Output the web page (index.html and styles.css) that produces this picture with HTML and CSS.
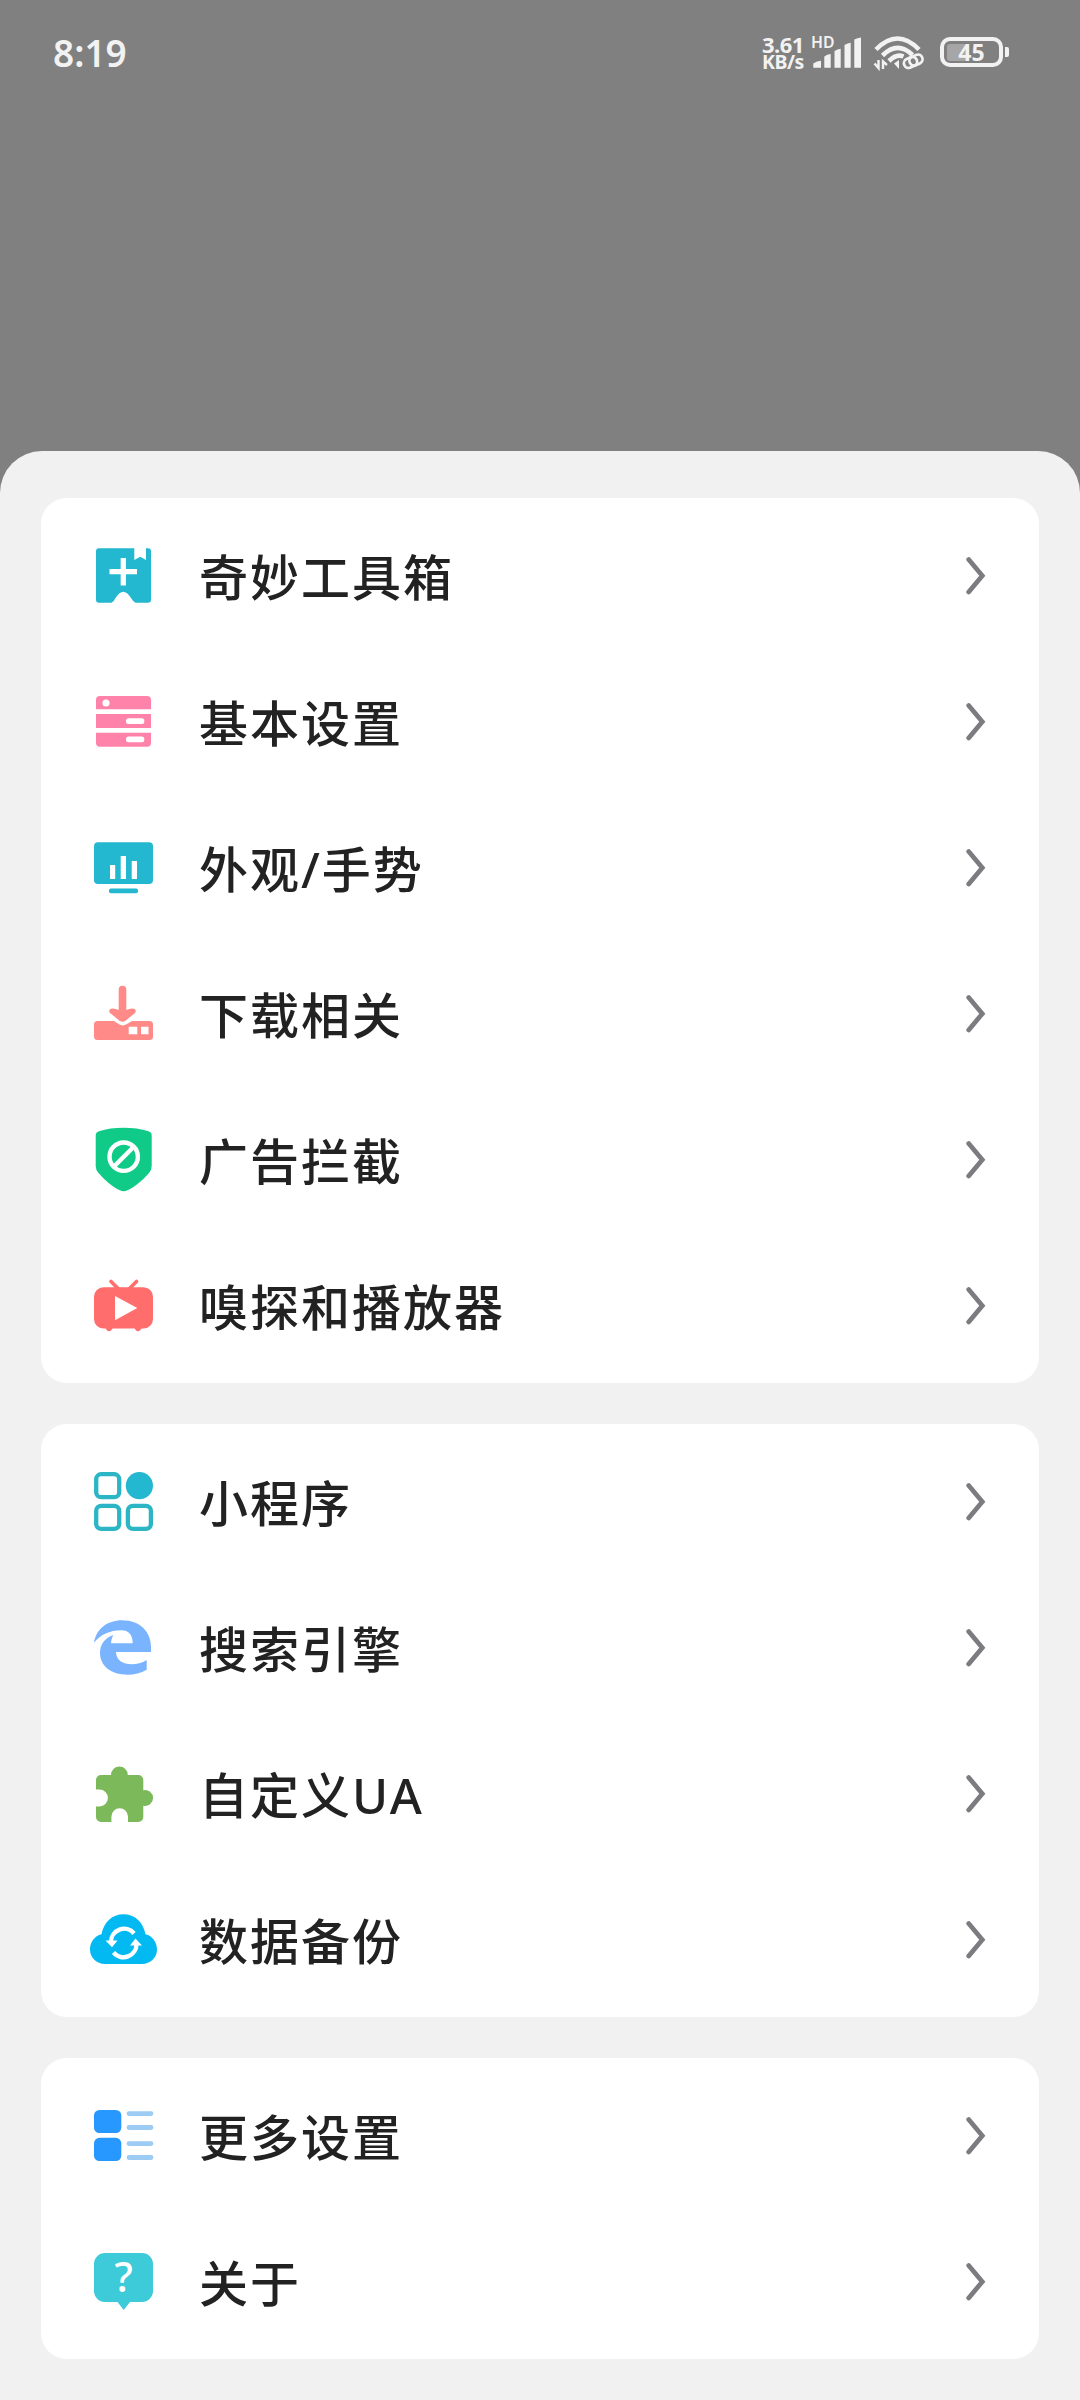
FILE: index.html
```html
<!DOCTYPE html>
<html lang="zh-CN">
<head>
<meta charset="utf-8">
<title>设置</title>
<link rel="stylesheet" href="styles.css">
</head>
<body>
<svg class="defs" width="0" height="0">
  <symbol id="chevron" viewBox="0 0 24 42"><path d="M2.700 4.500 16.300 20.700 2.700 37" fill="none" stroke="#7b7b80" stroke-width="4.700" stroke-linecap="round" stroke-linejoin="miter"/></symbol>
</svg>
<div class="screen">
  <header class="status">
    <div class="time">8:19</div>
    <div class="indicators">
      <div class="speed"><span class="rate">3.61</span><span class="unit">KB/s</span></div>
      <svg class="signal" width="52" height="38" viewBox="0 0 52 38" fill="#f2f2f2">
        <text x="1" y="14" font-size="16" font-weight="600" textLength="23.500" lengthAdjust="spacingAndGlyphs">HD</text>
        <path d="M3.300 33.700V29.500Q7 27 11 26.700V33.700Z"/>
        <path d="M14.300 33.700V22.500Q17 20.300 20.700 20V33.700ZM24.500 33.700V17Q27.500 15 30.700 14.700V33.700ZM34.500 33.700V11Q37.500 9 40.700 8.700V33.700ZM44.300 33.700V5.500Q47.500 3.800 51 3.500V33.700Z"/>
      </svg>
      <svg class="wifi" width="56" height="38" viewBox="0 0 56 38" fill="none" stroke="#f2f2f2">
        <path d="M6 15.500Q27.500-6.500 49 15.500" stroke-width="4.600"/>
        <path d="M12.500 21.500Q27.500 6.500 42.500 21" stroke-width="4.600"/>
        <path d="M19 27Q26.500 19.500 33.500 22.500" stroke-width="4.600"/>
        <path d="M24 29.500 29 26V35Z" fill="#f2f2f2" stroke="none"/>
        <path d="M8.500 26V34L4.500 29.500M13 35V27.500L17 31" stroke-width="2.400"/>
        <g transform="rotate(-24 43 27.300)" stroke-width="2.700"><rect x="33.500" y="22.700" width="13.500" height="9.300" rx="4.600"/><rect x="39.500" y="22.700" width="13.500" height="9.300" rx="4.600"/></g>
      </svg>
      <div class="battery"><span class="level"></span><span class="percent">45</span></div>
    </div>
  </header>

  <main class="sheet">
    <section class="card">
      <div class="row">
        <svg class="icon" viewBox="0 0 72 72">
          <path fill="#23b7d0" d="M12 8.300H47.300V20L53.300 16.700 59 20V8.300H61A3 3 0 0 1 64 11.300V59.700A3 3 0 0 1 61 62.700H48.500Q46 61.500 44 58Q40 51.700 36.300 51.700T28.500 58Q27 61.500 24.500 62.700H12A3 3 0 0 1 9 59.700V11.300A3 3 0 0 1 12 8.300Z"/>
          <path d="M36.300 18V45.500M22.500 31.700H50" stroke="#fff" stroke-width="5.300"/>
        </svg>
        <span class="label">奇妙工具箱</span><svg class="chev"><use href="#chevron"/></svg>
      </div>
      <div class="row">
        <svg class="icon" viewBox="0 0 72 72">
          <path fill="#ff82ab" d="M13 10H60A4 4 0 0 1 64 14V23.300H9V14A4 4 0 0 1 13 10ZM9 28H64V42H9ZM9 46.700H64V56.700A4 4 0 0 1 60 60.700H13A4 4 0 0 1 9 56.700Z"/>
          <g fill="#fff"><circle cx="19" cy="17" r="3.600"/><rect x="39" y="32.300" width="18.300" height="5.600" rx="2.500"/><rect x="39" y="50.600" width="18.300" height="5.600" rx="2.500"/></g>
        </svg>
        <span class="label">基本设置</span><svg class="chev"><use href="#chevron"/></svg>
      </div>
      <div class="row">
        <svg class="icon" viewBox="0 0 72 72">
          <g fill="#23b7d0"><rect x="7" y="10.300" width="59" height="41.700" rx="4"/><rect x="22" y="56.500" width="29" height="4.700" rx="2"/></g>
          <path fill="#fff" d="M23 33h5.200v14H23ZM33.700 24H39V47H33.700ZM44.700 29H50V47H44.700Z"/>
        </svg>
        <span class="label">外观/手势</span><svg class="chev"><use href="#chevron"/></svg>
      </div>
      <div class="row">
        <svg class="icon" viewBox="0 0 72 72">
          <path fill="#ff8a88" d="M10.500 43H27L32 46.300Q35.700 48.500 39.500 46.300L45 43H62.500A3.500 3.500 0 0 1 66 46.500V58.500A3.500 3.500 0 0 1 62.500 62H10.500A3.500 3.500 0 0 1 7 58.500V46.500A3.500 3.500 0 0 1 10.500 43Z"/>
          <path fill="#ff8a88" d="M31.700 11.500A3.800 3.800 0 0 1 39.300 11.500V32Q42 30.500 45.500 30.500C49 30.500 50 33.500 47 35.800L38.500 42.700Q35.700 45 32.500 42.700L24 35.800C21 33.500 22 30.500 25.500 30.500Q29 30.500 31.700 32Z"/>
          <path fill="#fff" d="M41.700 48.700h8.600V56.200h-8.600ZM54 48.700h7.500V56.200H54Z"/>
        </svg>
        <span class="label">下载相关</span><svg class="chev"><use href="#chevron"/></svg>
      </div>
      <div class="row">
        <svg class="icon" viewBox="0 0 72 72">
          <path fill="#10cb88" d="M12 7.200C26 2.600 47 2.600 61.500 7.200Q64.700 8.200 64.700 11.500V42Q64.700 46 62 49C55 57 49 62 40.500 66.300Q36.700 68 32.800 66.300C24.500 62 18.500 57 11.500 49Q8.700 46 8.700 42V11.500Q8.700 8.200 12 7.200Z"/>
          <g fill="none" stroke="#fff" stroke-width="4.400"><circle cx="36.700" cy="32.700" r="14.200"/><path d="M27 42.500 46.500 23"/></g>
        </svg>
        <span class="label">广告拦截</span><svg class="chev"><use href="#chevron"/></svg>
      </div>
      <div class="row">
        <svg class="icon" viewBox="0 0 72 72">
          <g fill="#ff6d6d"><rect x="7" y="17.300" width="59" height="41.200" rx="9.500"/><path d="M18.500 57.500H26Q24.500 61.200 22 61.200T18.500 57.500ZM47.500 57.500H55Q53.500 61.200 51 61.200T47.500 57.500Z"/></g>
          <path d="M24 11.500 32 19.500M49.500 11.500 41.500 19.500" stroke="#ff6d6d" stroke-width="3.600" stroke-linecap="round"/>
          <path fill="#fff" d="M28 26 50.300 38 28 50.200Z"/>
        </svg>
        <span class="label">嗅探和播放器</span><svg class="chev"><use href="#chevron"/></svg>
      </div>
    </section>

    <section class="card">
      <div class="row">
        <svg class="icon" viewBox="0 0 72 72">
          <g fill="none" stroke="#2cb5c5" stroke-width="4.300"><rect x="9.200" y="8.200" width="23" height="23" rx="5"/><rect x="9.200" y="39.900" width="23" height="23" rx="5"/><rect x="40.900" y="39.900" width="23" height="23" rx="5"/></g>
          <circle cx="52.400" cy="19.700" r="13.600" fill="#23b7d0"/>
        </svg>
        <span class="label">小程序</span><svg class="chev"><use href="#chevron"/></svg>
      </div>
      <div class="row">
        <svg class="icon" viewBox="0 0 72 72">
          <path fill="#7ab4ff" d="M7 30.700C9 17.500 20 8.300 35 8.300C54 8.300 64 21 64 35V40H29C29 48 36 52.300 44.700 52.300C50 52.300 55 51 59.700 48V57.700C54 61.300 47 62.700 40.700 62.700C24 62.700 13 54 13 41C13 32 18 26 26.300 23Q24.500 26 24 31.300H45.700C45.700 23 42 18.300 34 18.300C23 18.300 13 23 7 30.700Z"/>
        </svg>
        <span class="label">搜索引擎</span><svg class="chev"><use href="#chevron"/></svg>
      </div>
      <div class="row">
        <svg class="icon" viewBox="0 0 72 72">
          <path fill="#7bb95b" d="M14 17H24A8.400 8.400 0 0 1 40.800 17H51.300A5 5 0 0 1 56.300 22V32.200A8 8 0 1 1 56.300 47.800V59A5 5 0 0 1 51.300 64H41V58.500A8.300 8.300 0 0 0 24.400 58.500V64H14A5 5 0 0 1 9 59V48.400H12.500A8.400 8.400 0 0 0 12.500 31.600H9V22A5 5 0 0 1 14 17Z"/>
        </svg>
        <span class="label">自定义UA</span><svg class="chev"><use href="#chevron"/></svg>
      </div>
      <div class="row">
        <svg class="icon" viewBox="0 0 72 72">
          <path fill="#03b9f2" d="M18 60C9.500 60 3 53.500 3 45.500C3 38 7.500 32 14.500 30.200C17 18 25 10.300 36.500 10.300S56 18 58.500 30.200C65.500 32 70 38 70 45.500C70 53.500 63.500 60 55 60Z"/>
          <g fill="none" stroke="#fff" stroke-width="4.400"><path d="M24 38A13 13 0 0 1 47 29.500M49.500 40A13 13 0 0 1 26.500 48.500"/></g>
          <path fill="#fff" d="M18.500 36.500H30.500L25 43.200ZM43 41.500H55L48.500 34.500Z"/>
        </svg>
        <span class="label">数据备份</span><svg class="chev"><use href="#chevron"/></svg>
      </div>
    </section>

    <section class="card">
      <div class="row">
        <svg class="icon" viewBox="0 0 72 72">
          <g fill="#2698ff"><rect x="7" y="10" width="27.300" height="23" rx="5.500"/><rect x="7" y="37.800" width="27.300" height="23.200" rx="5.500"/></g>
          <path d="M42 13.600H64M42 27.500H64M42 43.600H64M42 57.500H64" stroke="#9ccbf4" stroke-width="4.800" stroke-linecap="round"/>
        </svg>
        <span class="label">更多设置</span><svg class="chev"><use href="#chevron"/></svg>
      </div>
      <div class="row">
        <svg class="icon" viewBox="0 0 72 72">
          <path fill="#3dcad9" d="M18 7H55A11 11 0 0 1 66 18V45A11 11 0 0 1 55 56H43L36.700 64 30.500 56H18A11 11 0 0 1 7 45V18A11 11 0 0 1 18 7Z"/>
          <text class="question" x="36.700" y="46.300" text-anchor="middle">?</text>
        </svg>
        <span class="label">关于</span><svg class="chev"><use href="#chevron"/></svg>
      </div>
    </section>
  </main>
</div>
</body>
</html>
```
FILE: styles.css
```css
* { box-sizing: border-box; }

body {
  margin: 0;
  background: #808080;
  font-family: "Noto Sans", "Noto Sans CJK SC", sans-serif;
}

.defs { display: block; height: 0; }

.screen {
  width: 1080px;
  height: 2400px;
  display: flex;
  flex-direction: column;
  overflow: hidden;
}

.status {
  height: 451px;
  flex: none;
  display: flex;
  justify-content: space-between;
  align-items: flex-start;
  padding: 34px 71px 0 53px;
  color: #f2f2f2;
}

.time {
  font-size: 37px;
  line-height: 37px;
  font-weight: 600;
}

.indicators {
  display: flex;
  align-items: flex-start;
}

.speed {
  display: flex;
  flex-direction: column;
  width: 48px;
  font-size: 22px;
  line-height: 18px;
  font-weight: 700;
  letter-spacing: -0.5px;
}

.rate { padding-top: 1px; }
.unit { font-size: 19.500px; }

.signal { overflow: visible; }

.wifi { margin-left: 8px; }

.battery {
  position: relative;
  width: 63px;
  height: 30px;
  margin: 3px 6px 0 14px;
  padding: 3px;
  border: 4px solid #f2f2f2;
  border-radius: 10px;
}

.battery::after {
  content: "";
  position: absolute;
  left: 61px;
  top: 6px;
  width: 4px;
  height: 10px;
  border-radius: 0 2px 2px 0;
  background: #f2f2f2;
}

.level {
  display: block;
  width: 20px;
  height: 17px;
  border-radius: 3px;
  background: #a6a6a6;
}

.percent {
  position: absolute;
  inset: 0;
  text-align: center;
  font-size: 23px;
  line-height: 22px;
  font-weight: 700;
}

.sheet {
  flex: 1;
  display: flex;
  flex-direction: column;
  gap: 41px;
  padding: 47px 41px 0;
  background: #f1f1f1;
  border-radius: 42px 42px 0 0;
}

.card {
  padding: 5px 0 4px;
  background: #fff;
  border-radius: 26px;
}

.row {
  height: 146px;
  display: flex;
  align-items: center;
  padding: 0 49px 0 46px;
}

.icon {
  width: 72px;
  height: 72px;
  flex: none;
}

.label {
  flex: 1;
  padding: 1px 0 0 40px;
  color: #222;
  font-family: "Noto Sans", "Noto Sans CJK SC", sans-serif;
  font-size: 49px;
  line-height: 72px;
  font-weight: 500;
  letter-spacing: 2px;
}

.chev {
  width: 24px;
  height: 42px;
  flex: none;
}

.question {
  fill: #fff;
  font-size: 41px;
  font-weight: 500;
}
```
